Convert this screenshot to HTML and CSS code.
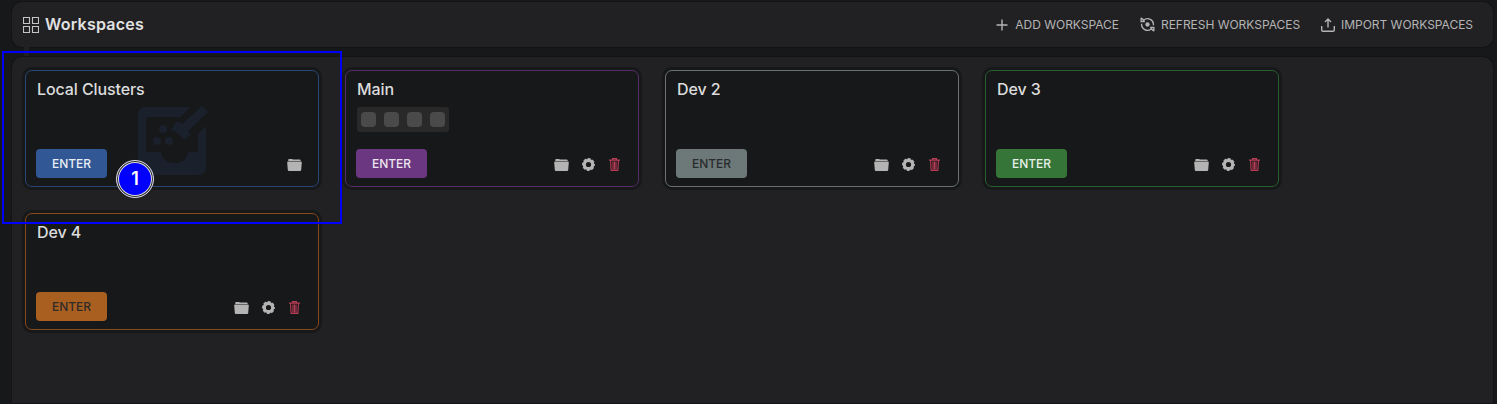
FILE: index.html
```html
<!DOCTYPE html>
<html lang="en">
<head>
<meta charset="utf-8">
<title>Workspaces</title>
<link rel="stylesheet" href="styles.css">
</head>
<body>
<svg class="defs" aria-hidden="true">
  <symbol id="folder" viewBox="0 0 15 12">
    <path d="M1.300.6Q1.400 0 2 0h3l1 .6h6.600q1 0 1.100.9v.4H1.300z"/>
    <path d="M1 2.600h13q.9 0 .8.9l-.6 7.400q-.1 1.100-1.100 1.100H1.900q-1 0-1.100-1.100L.2 3.500Q.1 2.600 1 2.600z"/>
  </symbol>
  <symbol id="gear" viewBox="0 0 14 14">
    <circle cx="7" cy="7" r="4.500" fill="none" stroke="currentColor" stroke-width="3.400"/>
    <circle cx="7" cy="7" r="6.200" fill="none" stroke="currentColor" stroke-width="1.500" stroke-dasharray="3.200 1.670" stroke-dashoffset="1.600"/>
  </symbol>
  <symbol id="trash" viewBox="0 0 11 13">
    <path d="M3.500 2V.6h4V2M0 2.100h11M1.500 2.500l.6 9.900h6.800l.6-9.900M4 3.500v8M5.500 3.500v8M7 3.500v8" fill="none" stroke="currentColor" stroke-width="1.100"/>
  </symbol>
</svg>
<header class="topbar">
  <h1 class="title">
    <svg class="grid-icon" viewBox="0 0 16 16"><path d="M.5.5h6v6h-6zM9.500.5h6v6h-6zM.5 9.500h6v6h-6zM9.500 9.500h6v6h-6z"/></svg>
    <span class="title-text">Workspaces</span>
  </h1>
  <nav class="actions">
    <a class="action"><svg class="action-icon plus" viewBox="0 0 12 12"><path d="M6 .5v11M.5 6h11"/></svg>ADD WORKSPACE</a>
    <a class="action"><svg class="action-icon refresh" viewBox="0 0 16 16"><path d="M4 3.300A6.300 6.300 0 0 1 14.300 8.800M12 12.700A6.300 6.300 0 0 1 1.700 7.200M1.200 .8v4h4M1.500 1l3 3M14.800 15.200v-4h-4M14.500 15l-3-3"/><circle cx="8" cy="8" r="2.300" fill="currentColor" stroke="none"/></svg>REFRESH WORKSPACES</a>
    <a class="action"><svg class="action-icon import" viewBox="0 0 14 14"><path d="M.7 8v4q0 1.200 1.200 1.200h10.200q1.200 0 1.200-1.200V8M7 9.500V1.200M4 4l3-3 3 3"/></svg>IMPORT WORKSPACES</a>
  </nav>
</header>
<div class="connector"></div>
<main class="panel">
  <section class="card blue">
    <svg class="watermark" viewBox="0 0 70 68"><path d="M8 0h44L42 10H8v35h15c1 15 26 15 27 0h10V27l8-8v41q0 8-8 8H8q-8 0-8-8V8q0-8 8-8z"/><path d="M64-1l6 6-20 19 3 4-7 5c-3-5-7-8-13-10l6-9 5 3z"/><circle cx="25" cy="22" r="4"/><circle cx="19" cy="34" r="4"/><circle cx="31" cy="34" r="4"/></svg>
    <h2 class="name">Local Clusters</h2>
    <div class="foot"><button class="enter">ENTER</button><div class="tools"><svg class="folder"><use href="#folder"/></svg></div></div>
  </section>
  <section class="card purple">
    <h2 class="name">Main</h2>
    <div class="clusters"><i></i><i></i><i></i><i></i></div>
    <div class="foot"><button class="enter">ENTER</button><div class="tools"><svg class="folder"><use href="#folder"/></svg><svg class="gear"><use href="#gear"/></svg><svg class="trash"><use href="#trash"/></svg></div></div>
  </section>
  <section class="card gray">
    <h2 class="name">Dev 2</h2>
    <div class="foot"><button class="enter">ENTER</button><div class="tools"><svg class="folder"><use href="#folder"/></svg><svg class="gear"><use href="#gear"/></svg><svg class="trash"><use href="#trash"/></svg></div></div>
  </section>
  <section class="card green">
    <h2 class="name">Dev 3</h2>
    <div class="foot"><button class="enter">ENTER</button><div class="tools"><svg class="folder"><use href="#folder"/></svg><svg class="gear"><use href="#gear"/></svg><svg class="trash"><use href="#trash"/></svg></div></div>
  </section>
  <section class="card orange">
    <h2 class="name">Dev 4</h2>
    <div class="foot"><button class="enter">ENTER</button><div class="tools"><svg class="folder"><use href="#folder"/></svg><svg class="gear"><use href="#gear"/></svg><svg class="trash"><use href="#trash"/></svg></div></div>
  </section>
</main>
<div class="highlight"></div>
<div class="step">1</div>
</body>
</html>
```
FILE: styles.css
```css
* { box-sizing: border-box; }
body {
  margin: 0;
  height: 404px;
  padding: 2px 4px 1px 12px;
  display: flex;
  flex-direction: column;
  overflow: hidden;
  background: #17181a;
  color: #e2e2e2;
  font-family: Inter, "Liberation Sans", sans-serif;
}
.defs { position: absolute; width: 0; height: 0; }
.topbar {
  height: 45px;
  flex: none;
  display: flex;
  align-items: center;
  justify-content: space-between;
  padding: 0 20px 0 11px;
  border-radius: 10px;
  background: #212123;
  box-shadow: 0 0 0 1px #141416;
}
.title {
  display: flex;
  align-items: center;
  gap: 6px;
  margin: 0;
  font-size: 16px;
  font-weight: 600;
  line-height: 20px;
  letter-spacing: .23px;
}
.title-text { padding-bottom: 2px; }
.grid-icon { width: 16px; height: 16px; fill: none; stroke: #c4c4c4; stroke-width: 1.1; }
.actions { display: flex; gap: 21px; }
.action {
  display: flex;
  align-items: center;
  color: #b4b4b4;
  font-size: 12px;
  line-height: 16px;
  letter-spacing: -.03px;
  white-space: nowrap;
}
.action-icon { fill: none; stroke: currentColor; stroke-width: 1.4; }
.plus { width: 12px; height: 12px; margin-right: 7px; }
.refresh { width: 15px; height: 15px; margin-right: 6px; }
.import { width: 14px; height: 14px; margin-right: 6px; }
.connector { width: 5px; height: 10px; flex: none; margin-left: 12px; background: #212123; }
.panel {
  flex: 1;
  display: grid;
  grid-template-columns: repeat(4, 294px);
  grid-auto-rows: 117px;
  gap: 26px;
  padding: 13px;
  border-radius: 10px 10px 0 0;
  background: #212123;
  box-shadow: 0 0 0 1px #141416;
}
.card {
  position: relative;
  display: flex;
  flex-direction: column;
  padding: 8px 18px 8px 10px;
  border: 1px solid var(--line);
  border-radius: 7px;
  background: #17181a;
  box-shadow: 0 0 0 3px #17181a;
}
.name { position: relative; margin: 0 0 0 1px; font-size: 16px; font-weight: 500; line-height: 20px; letter-spacing: -.1px; color: #dcdcdc; }
.foot { position: relative; display: flex; align-items: center; justify-content: space-between; margin-top: auto; }
.enter {
  width: 71px;
  height: 29px;
  padding: 0;
  border: 0;
  border-radius: 4px;
  background: var(--fill);
  color: var(--ink);
  font: 500 12px/29px Inter, "Liberation Sans", sans-serif;
  letter-spacing: -.05px;
}
.tools { display: flex; align-items: center; color: #b4b4b4; fill: currentColor; padding-top: 2px; }
.folder { width: 15px; height: 12px; }
.gear { width: 13px; height: 13px; margin: 0 14px 0 13px; }
.trash { width: 11px; height: 13px; color: #b83c55; }
.blue .tools { margin-right: -2px; }
.blue { --line: #294775; --fill: #315795; --ink: #e9edf4; }
.purple { --line: #562d66; --fill: #6b3780; --ink: #ece5ef; }
.gray { --line: #6c7071; --fill: #6d7979; --ink: #292c2d; }
.green { --line: #285f2c; --fill: #367538; --ink: #e7f0e8; }
.orange { --line: #84491c; --fill: #a85f20; --ink: #302c29; }
.clusters {
  align-self: flex-start;
  display: flex;
  gap: 8px;
  margin: 8px 0 0 1px;
  padding: 5px 4px;
  border-radius: 3px;
  background: #29292a;
}
.clusters i { width: 15px; height: 15px; border-radius: 4px; background: #4a4a4a; }
.watermark { position: absolute; left: 112px; top: 36px; width: 70px; height: 68px; fill: #1a202c; overflow: visible; }
.highlight { position: absolute; left: 2px; top: 51px; width: 340px; height: 173px; border: 2px solid #0000fe; }
.step {
  position: absolute;
  left: 116px;
  top: 160px;
  width: 38px;
  height: 38px;
  border: 1px solid #ddd;
  border-radius: 50%;
  background: #0000fe;
  box-shadow: 0 0 0 .5px #222, inset 0 0 0 1px #222, inset 0 0 0 2px #ddd;
  color: #fff;
  font-size: 18px;
  font-weight: 600;
  line-height: 36px;
  text-align: center;
}
```
